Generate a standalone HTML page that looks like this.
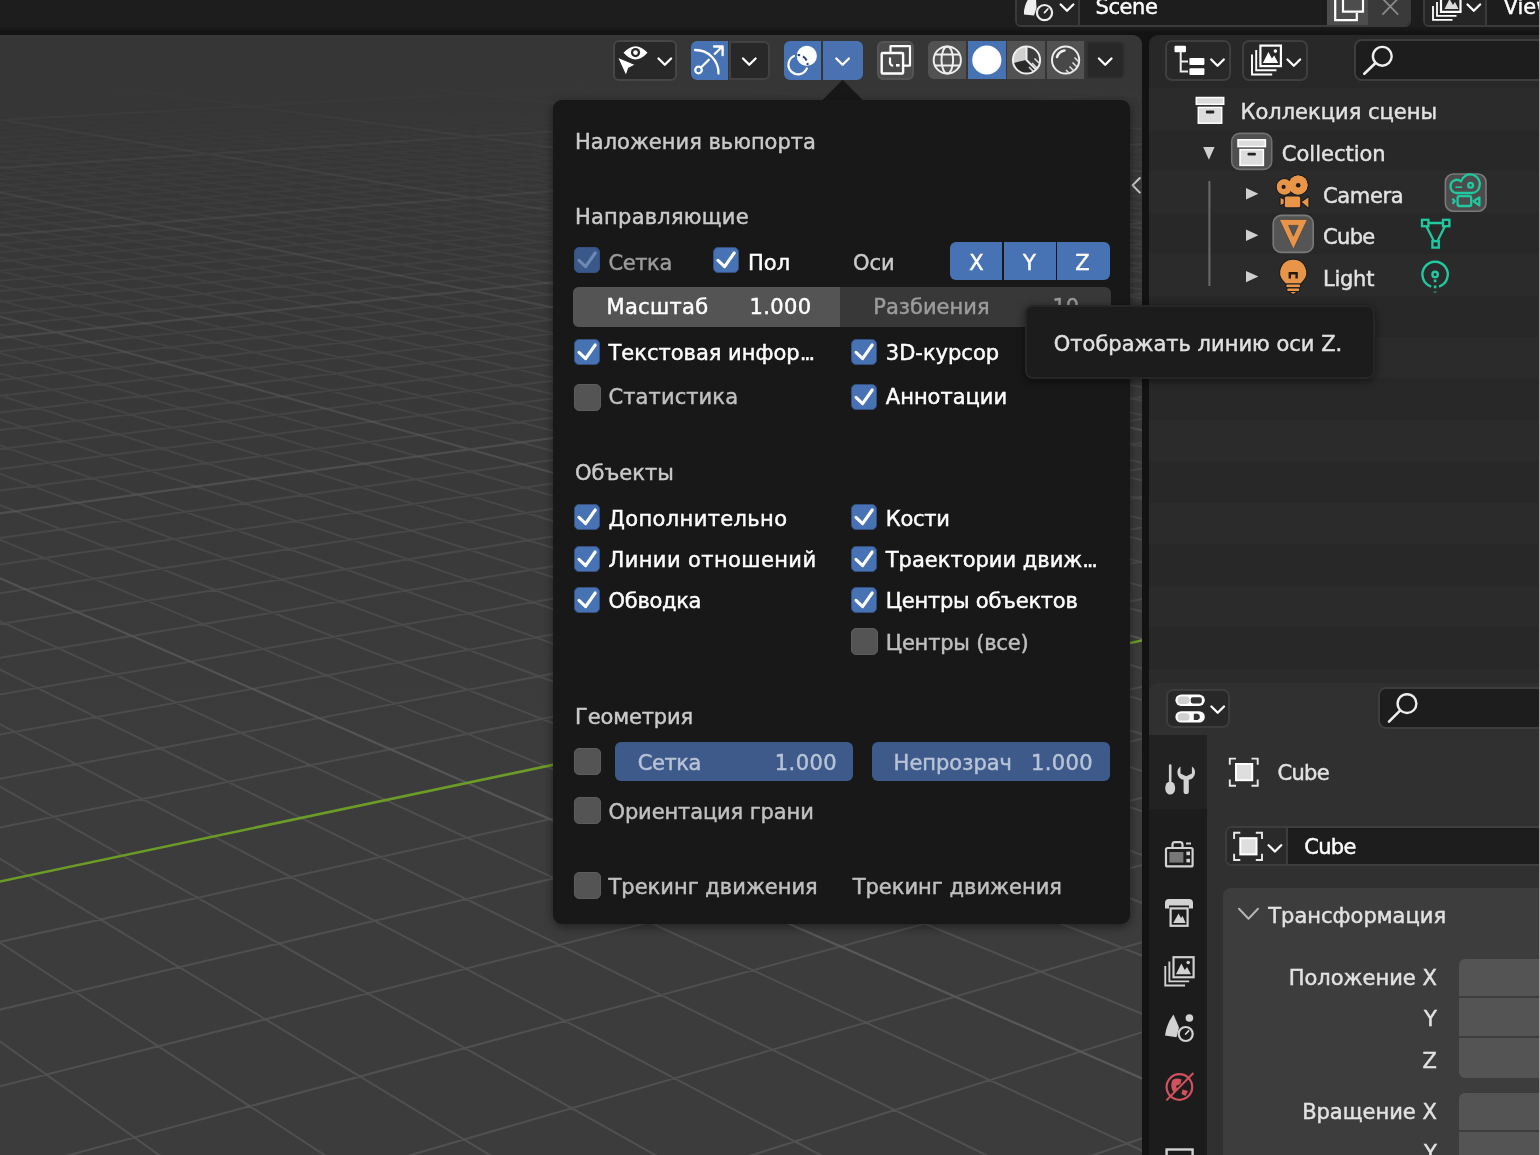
<!DOCTYPE html>
<html lang="ru">
<head>
<meta charset="utf-8">
<title>Blender</title>
<style>
*{box-sizing:border-box;margin:0;padding:0}
html,body{width:1540px;height:1155px;overflow:hidden;background:#131313}
body{position:relative;font-family:"DejaVu Sans","Liberation Sans",sans-serif;font-size:21px;color:#e6e6e6;line-height:1}
.abs{position:absolute}
#root{position:absolute;left:0;top:0;width:1540px;height:1155px;overflow:hidden;will-change:transform}
.t{position:absolute;white-space:nowrap;line-height:26px;height:26px;-webkit-text-stroke:.45px currentColor}
svg{position:absolute;overflow:visible}
#topbar{left:0;top:0;width:1540px;height:33px;background:linear-gradient(#1d1d1d 0,#1d1d1d 26px,#131313 33px)}
#viewport{left:0;top:35px;width:1142px;height:1120px;background:linear-gradient(#363636 0,#363636 8%,#3c3c3c 65%,#3c3c3c 100%);border-top-right-radius:9px;overflow:hidden}
#outliner{left:1149px;top:35px;width:400px;height:641px;background:#282828;border-radius:9px 0 0 9px;overflow:hidden}
#props{left:1149px;top:683px;width:400px;height:480px;background:#303030;border-radius:9px 0 0 0;overflow:hidden}
.btn{position:absolute;background:#282828;border:1px solid #3d3d3d;border-radius:6px}
.blue{background:#4772b3}
.cb{position:absolute;width:26px;height:26px;border-radius:5px;background:#4772b3;border:1px solid #35507d}
.cb.off{background:#545454;border-color:#5c5c5c;width:27px;height:27px;margin:-.5px 0 0 -.5px}
.cb.dis{background:#3a588a;border-color:#34507e}
.cb svg{left:-1px;top:-1px}
#pop{left:553px;top:100px;width:577px;height:824px;background:#181818;border-radius:9px;box-shadow:0 3px 10px rgba(0,0,0,.45)}
.lab{color:#cacaca}
.on{color:#ffffff}
.offt{color:#c0c0c0}
.dim{color:#9c9c9c}
.el{letter-spacing:-2.2px}
.otx{color:#e2e2e2}
.slab{color:#b9c3d6}
#tip{left:1025.2px;top:305.2px;width:349.4px;height:74px;background:#1c1c1c;border:2px solid #262626;border-radius:8px;box-shadow:0 2px 8px rgba(0,0,0,.5)}
</style>
</head>
<body><div id="root">
<div id="topbar" class="abs"></div>

<!-- ================= VIEWPORT ================= -->
<div id="viewport" class="abs">
<svg width="1142" height="1120" viewBox="0 35 1142 1120" style="left:0;top:0">
<defs>
<linearGradient id="fadeMinor" gradientUnits="userSpaceOnUse" x1="0" y1="35" x2="0" y2="1155">
<stop offset="0.06" stop-color="#fff" stop-opacity="0"/>
<stop offset="0.1" stop-color="#fff" stop-opacity="0.14"/>
<stop offset="0.25" stop-color="#fff" stop-opacity="0.4"/>
<stop offset="0.5" stop-color="#fff" stop-opacity="0.68"/>
<stop offset="0.75" stop-color="#fff" stop-opacity="0.9"/>
<stop offset="1" stop-color="#fff" stop-opacity="1"/>
</linearGradient>
<linearGradient id="fadeMajor" gradientUnits="userSpaceOnUse" x1="0" y1="35" x2="0" y2="1155">
<stop offset="0.04" stop-color="#fff" stop-opacity="0"/>
<stop offset="0.09" stop-color="#fff" stop-opacity="0.22"/>
<stop offset="0.25" stop-color="#fff" stop-opacity="0.5"/>
<stop offset="0.5" stop-color="#fff" stop-opacity="0.78"/>
<stop offset="0.75" stop-color="#fff" stop-opacity="0.95"/>
<stop offset="1" stop-color="#fff" stop-opacity="1"/>
</linearGradient>
<mask id="mMinor" maskUnits="userSpaceOnUse" x="0" y="35" width="1142" height="1120"><rect x="0" y="35" width="1142" height="1120" fill="url(#fadeMinor)"/></mask>
<mask id="mMajor" maskUnits="userSpaceOnUse" x="0" y="35" width="1142" height="1120"><rect x="0" y="35" width="1142" height="1120" fill="url(#fadeMajor)"/></mask>
</defs>
<g mask="url(#mMinor)"><path d="M-5.0 31.8L42.6 30.0M-5.0 33.7L91.3 30.0M-5.0 37.7L188.7 30.0M-5.0 39.7L237.3 30.0M-5.0 41.8L286.0 30.0M-5.0 43.9L334.7 30.0M-5.0 46.0L383.4 30.0M-5.0 48.2L432.0 30.0M-5.0 50.5L480.7 30.0M-5.0 52.8L529.4 30.0M-5.0 55.1L578.1 30.0M-5.0 60.0L675.4 30.0M-5.0 62.5L724.1 30.0M-5.0 65.1L772.8 30.0M-5.0 67.7L821.4 30.0M-5.0 70.4L870.1 30.0M-5.0 73.2L918.8 30.0M-5.0 76.0L967.5 30.0M-5.0 78.9L1016.1 30.0M-5.0 81.9L1064.8 30.0M-5.0 88.1L1147.0 30.8M-5.0 91.3L1147.0 33.2M-5.0 94.6L1147.0 35.8M-5.0 98.0L1147.0 38.3M-5.0 101.5L1147.0 41.0M-5.0 105.1L1147.0 43.8M-5.0 108.8L1147.0 46.6M-5.0 112.6L1147.0 49.5M-5.0 116.5L1147.0 52.5M-5.0 124.6L1147.0 58.7M-5.0 128.9L1147.0 62.0M-5.0 133.2L1147.0 65.3M-5.0 137.8L1147.0 68.8M-5.0 142.4L1147.0 72.4M-5.0 147.2L1147.0 76.1M-5.0 152.2L1147.0 79.9M-5.0 157.4L1147.0 83.8M-5.0 162.7L1147.0 87.9M-5.0 173.8L1147.0 96.4M-5.0 179.7L1147.0 100.9M-5.0 185.8L1147.0 105.6M-5.0 192.2L1147.0 110.5M-5.0 198.7L1147.0 115.5M-5.0 205.5L1147.0 120.7M-5.0 212.6L1147.0 126.1M-5.0 220.0L1147.0 131.8M-5.0 227.6L1147.0 137.7M-5.0 243.9L1147.0 150.1M-5.0 252.6L1147.0 156.8M-5.0 261.7L1147.0 163.7M-5.0 271.2L1147.0 171.0M-5.0 281.1L1147.0 178.6M-5.0 291.4L1147.0 186.5M-5.0 302.3L1147.0 194.9M-5.0 313.8L1147.0 203.6M-5.0 325.8L1147.0 212.8M-5.0 351.7L1147.0 232.7M-5.0 365.8L1147.0 243.5M-5.0 380.6L1147.0 254.9M-5.0 396.3L1147.0 266.9M-5.0 413.0L1147.0 279.7M-5.0 430.7L1147.0 293.2M-5.0 449.5L1147.0 307.6M-5.0 469.6L1147.0 323.0M-5.0 491.1L1147.0 339.5M-5.0 538.7L1147.0 376.0M-5.0 565.3L1147.0 396.3M-5.0 593.9L1147.0 418.2M-5.0 624.9L1147.0 442.0M-5.0 658.6L1147.0 467.8M-5.0 695.3L1147.0 496.0M-5.0 735.5L1147.0 526.7M-5.0 779.7L1147.0 560.6M-5.0 828.4L1147.0 597.9M-5.0 943.0L1147.0 685.7M-5.0 1010.8L1147.0 737.6M-5.0 1087.6L1147.0 796.5M51.0 1160.0L1147.0 863.6M393.6 1160.0L1147.0 940.8M736.3 1160.0L1147.0 1030.7M1078.9 1160.0L1147.0 1136.6M-0.0 1160.0L-5.0 1156.1M166.0 1160.0L-5.0 1037.9M332.0 1160.0L-5.0 939.3M498.0 1160.0L-5.0 855.7M664.0 1160.0L-5.0 783.9M830.1 1160.0L-5.0 721.6M996.1 1160.0L-5.0 667.1M1147.0 1153.0L-5.0 618.9M1147.0 1015.9L-5.0 537.7M1147.0 957.6L-5.0 503.2M1147.0 904.8L-5.0 471.9M1147.0 856.8L-5.0 443.5M1147.0 812.9L-5.0 417.5M1147.0 772.7L-5.0 393.7M1147.0 735.7L-5.0 371.7M1147.0 701.5L-5.0 351.5M1147.0 669.8L-5.0 332.7M1147.0 613.0L-5.0 299.1M1147.0 587.4L-5.0 283.9M1147.0 563.5L-5.0 269.7M1147.0 541.1L-5.0 256.4M1147.0 520.0L-5.0 244.0M1147.0 500.1L-5.0 232.2M1147.0 481.4L-5.0 221.1M1147.0 463.7L-5.0 210.6M1147.0 447.0L-5.0 200.7M1147.0 416.1L-5.0 182.4M1147.0 401.8L-5.0 174.0M1147.0 388.2L-5.0 165.9M1147.0 375.3L-5.0 158.2M1147.0 362.9L-5.0 150.9M1147.0 351.1L-5.0 143.9M1147.0 339.9L-5.0 137.3M1147.0 329.1L-5.0 130.9M1147.0 318.8L-5.0 124.8M1147.0 299.4L-5.0 113.3M1147.0 290.3L-5.0 107.9M1147.0 281.5L-5.0 102.7M1147.0 273.1L-5.0 97.7M1147.0 265.0L-5.0 92.9M1147.0 257.2L-5.0 88.3M1147.0 249.7L-5.0 83.9M1147.0 242.4L-5.0 79.6M1147.0 235.4L-5.0 75.4M1147.0 222.2L-5.0 67.5M1147.0 215.8L-5.0 63.8M1147.0 209.7L-5.0 60.2M1147.0 203.8L-5.0 56.7M1147.0 198.1L-5.0 53.3M1147.0 192.6L-5.0 50.0M1147.0 187.2L-5.0 46.8M1147.0 182.0L-5.0 43.8M1147.0 176.9L-5.0 40.8M1147.0 167.3L-5.0 35.0M1147.0 162.7L-5.0 32.3M1147.0 158.2L-1.7 30.0M1147.0 153.8L21.9 30.0M1147.0 149.5L45.5 30.0M1147.0 145.4L69.1 30.0M1147.0 141.4L92.6 30.0M1147.0 137.4L116.2 30.0M1147.0 133.6L139.8 30.0M1147.0 126.3L187.0 30.0M1147.0 122.7L210.6 30.0M1147.0 119.3L234.2 30.0M1147.0 115.9L257.7 30.0M1147.0 112.6L281.3 30.0M1147.0 109.4L304.9 30.0M1147.0 106.3L328.5 30.0M1147.0 103.2L352.1 30.0M1147.0 100.2L375.7 30.0M1147.0 94.5L422.8 30.0M1147.0 91.7L446.4 30.0M1147.0 88.9L470.0 30.0M1147.0 86.3L493.6 30.0M1147.0 83.7L517.2 30.0M1147.0 81.1L540.8 30.0M1147.0 78.6L564.4 30.0M1147.0 76.1L587.9 30.0M1147.0 73.7L611.5 30.0M1147.0 69.1L658.7 30.0M1147.0 66.8L682.3 30.0M1147.0 64.6L705.9 30.0M1147.0 62.4L729.5 30.0M1147.0 60.3L753.1 30.0M1147.0 58.2L776.6 30.0M1147.0 56.2L800.2 30.0M1147.0 54.2L823.8 30.0M1147.0 52.2L847.4 30.0M1147.0 48.4L894.6 30.0M1147.0 46.5L918.2 30.0M1147.0 44.7L941.7 30.0M1147.0 42.9L965.3 30.0M1147.0 41.1L988.9 30.0M1147.0 39.4L1012.5 30.0M1147.0 37.6L1036.1 30.0M1147.0 36.0L1059.7 30.0M1147.0 34.3L1083.3 30.0M1147.0 31.1L1130.4 30.0" stroke="#515151" stroke-width="2" fill="none"/></g>
<g mask="url(#mMajor)"><path d="M-5.0 35.7L140.0 30.0M-5.0 57.5L626.7 30.0M-5.0 85.0L1113.5 30.0M-5.0 120.5L1147.0 55.5M-5.0 168.2L1147.0 92.1M-5.0 235.6L1147.0 143.8M-5.0 338.4L1147.0 222.5M-5.0 514.0L1147.0 357.1M1147.0 1080.7L-5.0 576.1M1147.0 640.4L-5.0 315.3M1147.0 431.1L-5.0 191.3M1147.0 308.9L-5.0 118.9M1147.0 228.7L-5.0 71.4M1147.0 172.0L-5.0 37.9M1147.0 129.9L163.4 30.0M1147.0 97.3L399.3 30.0M1147.0 71.4L635.1 30.0M1147.0 50.3L871.0 30.0M1147.0 32.7L1106.8 30.0" stroke="#595959" stroke-width="2.2" fill="none"/></g>
<path d="M-5.0 882.6L1147.0 639.4" stroke="#6c9c28" stroke-width="2.6" fill="none"/>
</svg>
</div>

<!-- viewport header buttons -->
<div class="abs" style="left:613.0px;top:40.0px;width:64.0px;height:40.5px;background:#282828;border:2px solid #464646;border-radius:6px"></div>
<div class="abs" style="left:690.8px;top:41.3px;width:37.2px;height:38.3px;background:#4772b3;border:2px solid #4772b3;border-radius:6px 0 0 6px"></div>
<div class="abs" style="left:729.0px;top:40.5px;width:41.0px;height:39.5px;background:#282828;border:2px solid #424242;border-radius:0 6px 6px 0"></div>
<div class="abs" style="left:784.2px;top:41.3px;width:36.8px;height:38.3px;background:#4772b3;border:2px solid #4772b3;border-radius:6px 0 0 6px"></div>
<div class="abs" style="left:822.8px;top:41.3px;width:40.0px;height:38.3px;background:#4a71b0;border:2px solid #4a71b0;border-radius:0 6px 6px 0"></div>
<div class="abs" style="left:877.0px;top:41.0px;width:37.0px;height:38.8px;background:#4b4b4b;border:2px solid #545454;border-radius:6px"></div>
<div class="abs" style="left:928.0px;top:41.2px;width:38.0px;height:38.0px;background:#525252;border:2px solid #525252;border-radius:6px 0 0 6px"></div>
<div class="abs" style="left:967.8px;top:41.2px;width:37.8px;height:38.0px;background:#4772b3;border:2px solid #4772b3;border-radius:0"></div>
<div class="abs" style="left:1007.4px;top:41.2px;width:37.6px;height:38.0px;background:#525252;border:2px solid #525252;border-radius:0"></div>
<div class="abs" style="left:1046.8px;top:41.2px;width:37.7px;height:38.0px;background:#525252;border:2px solid #525252;border-radius:0"></div>
<div class="abs" style="left:1086.0px;top:41.2px;width:39.0px;height:38.0px;background:#282828;border:2px solid #303030;border-radius:0 6px 6px 0"></div>

<!-- ================= TOPBAR ================= -->
<div class="abs" style="left:1014.5px;top:-8px;width:396px;height:35.2px;background:#1d1d1d;border:2px solid #3a3a3a;border-radius:6px;overflow:hidden"><div class="abs" style="left:0;top:0;width:63.5px;height:34px;background:#252525;border-right:2px solid #3a3a3a"></div><div class="abs" style="left:310px;top:0;width:41.5px;height:34px;background:#4d4d4d"></div><div class="abs" style="left:351.5px;top:0;width:42px;height:34px;background:#3a3a3a"></div></div>
<div class="t on" style="left:1095.5px;top:-5.6px;letter-spacing:-.4px">Scene</div>
<div class="abs" style="left:1422.5px;top:-8px;width:140px;height:35.2px;background:#1d1d1d;border:2px solid #3a3a3a;border-radius:6px;overflow:hidden"><div class="abs" style="left:0;top:0;width:62.5px;height:34px;background:#252525;border-right:2px solid #3a3a3a"></div></div>
<div class="t on" style="left:1503.5px;top:-5.8px;">ViewLayer</div>

<!-- ================= OUTLINER ================= -->
<div id="outliner" class="abs"></div>
<div class="abs" style="left:1149px;top:88.3px;width:400px;height:41.45px;background:#2b2b2b"></div>
<div class="abs" style="left:1149px;top:171.2px;width:400px;height:41.45px;background:#2b2b2b"></div>
<div class="abs" style="left:1149px;top:254.1px;width:400px;height:41.45px;background:#2b2b2b"></div>
<div class="abs" style="left:1149px;top:337.0px;width:400px;height:41.45px;background:#2b2b2b"></div>
<div class="abs" style="left:1149px;top:419.9px;width:400px;height:41.45px;background:#2b2b2b"></div>
<div class="abs" style="left:1149px;top:502.8px;width:400px;height:41.45px;background:#2b2b2b"></div>
<div class="abs" style="left:1149px;top:585.7px;width:400px;height:41.45px;background:#2b2b2b"></div>
<div class="abs" style="left:1149px;top:668.6px;width:400px;height:41.45px;background:#2b2b2b"></div>
<div class="abs" style="left:1165.0px;top:39.5px;width:66.0px;height:41.5px;background:#282828;border:2px solid #3f3f3f;border-radius:7px"></div>
<div class="abs" style="left:1242.0px;top:39.5px;width:65.5px;height:41.5px;background:#282828;border:2px solid #3f3f3f;border-radius:7px"></div>
<div class="abs" style="left:1353.5px;top:39.3px;width:206.5px;height:42.1px;background:#1d1d1d;border:2px solid #3d3d3d;border-radius:8px"></div>
<div class="t otx" style="left:1240.5px;top:99.3px;">Коллекция сцены</div>
<div class="t otx" style="left:1281.8px;top:140.9px;">Collection</div>
<div class="t otx" style="left:1323.0px;top:182.5px;letter-spacing:-.35px">Camera</div>
<div class="t otx" style="left:1323.0px;top:224.1px;letter-spacing:-.65px">Cube</div>
<div class="t otx" style="left:1323.0px;top:265.7px;letter-spacing:-.26px">Light</div>

<!-- ================= PROPERTIES ================= -->
<div id="props" class="abs"></div>
<div class="abs" style="left:1149px;top:734.5px;width:57.5px;height:430px;background:#1c1c1c"></div>
<div class="abs" style="left:1149px;top:734.5px;width:57.5px;height:74.5px;background:#222222"></div>
<div class="abs" style="left:1165.5px;top:688.5px;width:64.5px;height:39.5px;background:#282828;border:2px solid #3d3d3d;border-radius:7px"></div>
<div class="abs" style="left:1377.8px;top:687.0px;width:182.2px;height:42.0px;background:#1d1d1d;border:2px solid #3d3d3d;border-radius:8px"></div>
<div class="t otx" style="left:1277.5px;top:759.7px;letter-spacing:-.7px">Cube</div>
<div class="abs" style="left:1224.5px;top:826.3px;width:340px;height:40px;background:#1d1d1d;border:2px solid #3d3d3d;border-radius:7px;overflow:hidden"><div class="abs" style="left:0;top:0;width:61.5px;height:40px;background:#2a2a2a;border-right:2px solid #3d3d3d"></div></div>
<div class="t on" style="left:1304.3px;top:834.1px;letter-spacing:-.7px">Cube</div>
<div class="abs" style="left:1222.5px;top:887.5px;width:340px;height:300px;background:#3d3d3d;border-radius:8px"></div>
<div class="t otx" style="left:1268.3px;top:903.3px;">Трансформация</div>
<div class="abs" style="left:1458.8px;top:958.6px;width:100px;height:37.6px;background:#545454;border-radius:6px 0 0 0"></div>
<div class="abs" style="left:1458.8px;top:998.0px;width:100px;height:38.4px;background:#545454;border-radius:0"></div>
<div class="abs" style="left:1458.8px;top:1038.3px;width:100px;height:39.3px;background:#545454;border-radius:0 0 0 6px"></div>
<div class="abs" style="left:1458.8px;top:1093.2px;width:100px;height:37.2px;background:#545454;border-radius:6px 0 0 0"></div>
<div class="abs" style="left:1458.8px;top:1132.2px;width:100px;height:37.8px;background:#545454;border-radius:0"></div>
<div class="t otx" style="left:1136.8px;top:964.9px;width:300px;text-align:right">Положение X</div>
<div class="t otx" style="left:1136.8px;top:1005.9px;width:300px;text-align:right">Y</div>
<div class="t otx" style="left:1136.8px;top:1047.5px;width:300px;text-align:right">Z</div>
<div class="t otx" style="left:1136.8px;top:1098.9px;width:300px;text-align:right">Вращение X</div>
<div class="t otx" style="left:1136.8px;top:1140.3px;width:300px;text-align:right">Y</div>

<!-- ================= ICONS (page coordinates) ================= -->
<svg width="1540" height="1155" viewBox="0 0 1540 1155" style="left:0;top:0">
<path d="M623.5 52.8Q635.5 39.5 647.5 52.8Q635.5 66 623.5 52.8Z" fill="#fff"/><circle cx="635.5" cy="52.6" r="4.6" fill="#282828"/><circle cx="635.5" cy="52.6" r="2.3" fill="#fff"/>
<path d="M617.3 57L635.6 64.8L628.6 68.4L626 76Z" fill="#fff" stroke="#282828" stroke-width="1.2" stroke-linejoin="round"/>
<path d="M658.5 58.5L664.8 64.7L671.1 58.5" fill="none" stroke="#fff" stroke-width="2.3" stroke-linecap="round" stroke-linejoin="round"/>
<path d="M701 67.5L722 46.8M714 46.5H722.6V55.2" fill="none" stroke="#fff" stroke-width="2.3" stroke-linecap="round" stroke-linejoin="round"/>
<path d="M695 50A23 23 0 0 1 718.5 73.5" fill="none" stroke="#4772b3" stroke-width="6.5"/>
<path d="M695 50A23 23 0 0 1 718.5 73.5" fill="none" stroke="#fff" stroke-width="2.3" stroke-linecap="round"/>
<circle cx="698.5" cy="70" r="3.3" fill="none" stroke="#fff" stroke-width="2.2"/>
<path d="M743.0 58.5L749.3 64.7L755.6 58.5" fill="none" stroke="#fff" stroke-width="2.3" stroke-linecap="round" stroke-linejoin="round"/>
<circle cx="806.8" cy="55.9" r="10.1" fill="#fff"/>
<path d="M794 56A9.6 9.6 0 1 0 806.9 68.4" fill="none" stroke="#fff" stroke-width="2.2" stroke-linecap="round"/>
<path d="M797.6 55.1A9.6 9.6 0 0 1 807.6 65.2" fill="none" stroke="#27406e" stroke-width="2" stroke-dasharray="2.6 3 5.4 2.6 4.4 9"/>
<path d="M836.3 58.5L842.6 64.7L848.9 58.5" fill="none" stroke="#fff" stroke-width="2.3" stroke-linecap="round" stroke-linejoin="round"/>
<path d="M822 100.5L842.6 79.8L863.2 100.5Z" fill="#181818"/>
<path d="M890.5 52V46.2H910V65.6H904" fill="none" stroke="#fff" stroke-width="2.2" stroke-linejoin="round"/>
<rect x="881.7" y="53" width="21.4" height="20.5" fill="none" stroke="#fff" stroke-width="2.4" rx="1"/>
<path d="M890 57.5V62.5A3.2 3.2 0 0 0 893.2 65.7" fill="none" stroke="#fff" stroke-width="2.2"/><rect x="896" y="64" width="3.6" height="2.6" fill="#fff"/>
<g fill="none" stroke="#eee" stroke-width="2"><circle cx="947.3" cy="60" r="13.6"/><ellipse cx="947.3" cy="60" rx="5.8" ry="13.6"/><path d="M934.8 54.5H959.8M934.8 65.5H959.8"/></g>
<circle cx="986.8" cy="60" r="14.6" fill="#fff"/>
<circle cx="1026.5" cy="60" r="13.6" fill="#3c3c3c"/><path d="M1026.5 46.4A13.6 13.6 0 0 0 1013.2 63L1026.5 60Z" fill="#d0d0d0"/><path d="M1026.5 60L1013.4 63.5A13.6 13.6 0 0 0 1036 69.6Z" fill="#2a2a2a"/>
<path d="M1029 67L1034 72M1032 63L1037.5 68.5M1034.5 58.5L1039 63" stroke="#ddd" stroke-width="1.6"/>
<g fill="none" stroke="#eee" stroke-width="2"><circle cx="1026.5" cy="60" r="13.6"/><path d="M1026.5 46.4V60L1036 69.6"/></g>
<circle cx="1065.6" cy="60" r="13.6" fill="#484848" stroke="#eee" stroke-width="2"/>
<path d="M1057 57A9.5 9.5 0 0 1 1064.5 50.5" fill="none" stroke="#eee" stroke-width="2.6" stroke-linecap="round"/>
<path d="M1066 70L1070 74M1069.5 66.5L1074 71M1072.5 62.5L1077 67M1074.5 57.5L1078.5 61.5" stroke="#ddd" stroke-width="1.6"/>
<path d="M1098.9 58.5L1105.2 64.7L1111.5 58.5" fill="none" stroke="#fff" stroke-width="2.3" stroke-linecap="round" stroke-linejoin="round"/>
<path d="M1139.8 178L1132.6 185.3L1139.8 192.6" fill="none" stroke="#c8c8c8" stroke-width="2" stroke-linecap="round" stroke-linejoin="round"/>
<path d="M1029 -2L1036 -2L1036.5 8L1034 15.5L1024 14.5Q1023.5 6 1029 -2Z" fill="#eee"/>
<circle cx="1044.5" cy="12.6" r="7.6" fill="#252525" stroke="#eee" stroke-width="2.2"/><path d="M1044.5 12.6L1047.8 9" stroke="#eee" stroke-width="1.8" stroke-linecap="round"/>
<path d="M1060.7 4.5L1067.0 10.7L1073.3 4.5" fill="none" stroke="#fff" stroke-width="2.3" stroke-linecap="round" stroke-linejoin="round"/>
<path d="M1343 -2V11.6H1363V-2" fill="none" stroke="#fff" stroke-width="2.2"/><path d="M1335.2 -2V20.2H1356.8V13" fill="none" stroke="#fff" stroke-width="2.2"/>
<path d="M1381 -3L1398.2 14.6M1399.5 -3L1382.4 14.6" stroke="#8a8a8a" stroke-width="1.8"/>
<path d="M1441 -2V11.8H1460.5V-2" fill="none" stroke="#fff" stroke-width="2.2"/><path d="M1444.5 9L1449.5 -1L1453 5L1455 2L1458.5 9Z" fill="#ddd"/>
<path d="M1437 2V15.8H1456.5M1433 6V19.8H1452.5" fill="none" stroke="#fff" stroke-width="1.8"/>
<path d="M1467.5 4.5L1473.8 10.7L1480.1 4.5" fill="none" stroke="#fff" stroke-width="2.3" stroke-linecap="round" stroke-linejoin="round"/>
<rect x="1174.5" y="45.8" width="11.5" height="6.4" fill="#fff" rx="1"/><path d="M1180.7 52V71.6H1188M1180.7 61.6H1188" fill="none" stroke="#eee" stroke-width="2"/><rect x="1189.4" y="58" width="15" height="7" fill="#fff" rx="1"/><rect x="1189.4" y="68.2" width="15" height="6.8" fill="#fff" rx="1"/>
<path d="M1211.2 59.5L1217.5 65.7L1223.8 59.5" fill="none" stroke="#fff" stroke-width="2.3" stroke-linecap="round" stroke-linejoin="round"/>
<g transform="translate(1260.4 45.6) scale(1.000)"><rect x="0" y="0" width="20.5" height="20.5" fill="none" stroke="#fff" stroke-width="2.2"/><path d="M2.5 17.5L8 6.5L11.5 13L13.8 10L17.8 17.5Z" fill="#fff"/><circle cx="15" cy="5.5" r="1.8" fill="#fff"/><path d="M-4.2 4.5V24.7H16M-8.4 9V28.9H11.8" fill="none" stroke="#fff" stroke-width="1.9"/></g>
<path d="M1287.5 59.5L1293.8 65.7L1300.1 59.5" fill="none" stroke="#fff" stroke-width="2.3" stroke-linecap="round" stroke-linejoin="round"/>
<circle cx="1382.3" cy="56.3" r="9.4" fill="none" stroke="#eee" stroke-width="2.4"/><path d="M1375.5 63L1364.3 73.8" stroke="#eee" stroke-width="2.6" stroke-linecap="round"/>
<rect x="1196.3" y="97.5" width="27.4" height="6.8" fill="#dcdcdc" stroke="#fff" stroke-width="1.5"/><rect x="1198.3" y="107.4" width="23.4" height="15.8" fill="#dcdcdc" stroke="#fff" stroke-width="1.5"/><rect x="1205.9" y="110.6" width="8.4" height="2.8" fill="#222" rx="1"/>
<rect x="1231.7" y="133.4" width="40" height="36" rx="8" fill="#4f4f4f" stroke="#717171" stroke-width="1.6"/>
<rect x="1238.0" y="139.8" width="27.4" height="6.8" fill="#dcdcdc" stroke="#fff" stroke-width="1.5"/><rect x="1240.0" y="149.6" width="23.4" height="15.8" fill="#dcdcdc" stroke="#fff" stroke-width="1.5"/><rect x="1247.5" y="152.8" width="8.4" height="2.8" fill="#222" rx="1"/>
<path d="M1203.2 147L1214.6 147L1208.9 159.8Z" fill="#cfcfcf"/>
<path d="M1246 188.1L1246 199.5L1258.4 193.8Z" fill="#cfcfcf"/>
<path d="M1246 229.5L1246 240.9L1258.4 235.2Z" fill="#cfcfcf"/>
<path d="M1246 270.9L1246 282.3L1258.4 276.6Z" fill="#cfcfcf"/>
<path d="M1209.4 181V286" stroke="#6a6a6a" stroke-width="2"/>
<g fill="#e8954a" stroke="#1c1c1c" stroke-width="2.4" stroke-linejoin="round" paint-order="stroke"><circle cx="1284.4" cy="186.8" r="7.6"/><circle cx="1298.2" cy="185" r="9.4"/><rect x="1284.8" y="196.6" width="15.4" height="10.6" rx="1.5"/><path d="M1301.8 202L1308.4 197.4V207.6Z"/><path d="M1280.6 198L1283.6 199.5V203.5L1280.6 205Z"/></g>
<g fill="#e8954a"><circle cx="1284.4" cy="186.8" r="7.6"/><circle cx="1298.2" cy="185" r="9.4"/></g>
<circle cx="1283.6" cy="186.9" r="2.1" fill="#241a10"/><circle cx="1298.2" cy="185.2" r="2.3" fill="#241a10"/>
<rect x="1273.2" y="215.4" width="40" height="37" rx="8" fill="#555" stroke="#7a7a7a" stroke-width="1.6"/>
<path d="M1279.4 219.4H1307.4L1293.4 249.2ZM1288.6 225.4H1298.2L1293.4 236.2Z" fill="#e8954a" fill-rule="evenodd" stroke="#3a3a3a" stroke-width=".6"/>
<g fill="#e8954a" stroke="#1c1c1c" stroke-width="2.2" stroke-linejoin="round" paint-order="stroke"><path d="M1293.2 259.8A12.6 12.6 0 0 1 1302.4 281.4L1300.4 283.6H1286L1284 281.4A12.6 12.6 0 0 1 1293.2 259.8Z"/><rect x="1286.4" y="284.6" width="13.6" height="2.6" rx="1"/><rect x="1287.2" y="288.4" width="12" height="2.6" rx="1"/><path d="M1290.4 292L1296 292L1293.2 294Z"/></g>
<path d="M1288.6 272H1297.8V278.4H1295.4V274.6H1291V278.4H1288.6Z" fill="#241a10"/>
<rect x="1445.4" y="174" width="40.6" height="37.2" rx="8" fill="#4c4c4c" stroke="#7a7a7a" stroke-width="1.6"/>
<g fill="none" stroke="#20c9a0" stroke-width="2.3" stroke-linejoin="round"><path d="M1450.6 186.5A6.2 6.2 0 0 1 1461 181.5A8.6 8.6 0 0 1 1479.5 186.5A8 8 0 0 1 1471.5 193H1456.5A6 6 0 0 1 1450.6 186.5Z"/><circle cx="1470.6" cy="185.2" r="2.4"/><path d="M1455.5 187.2H1462" stroke-width="1.6"/><rect x="1457.6" y="196.2" width="13.6" height="9.8" rx="1.8"/><path d="M1473.5 201.2L1479.4 197.4V205.4Z"/><path d="M1452.4 198.6L1454.8 201.2L1452.4 203.8"/></g>
<g fill="none" stroke="#20c9a0" stroke-width="2.3"><rect x="1422" y="219.8" width="6.4" height="6.4"/><rect x="1443" y="219.8" width="6.4" height="6.4"/><rect x="1432.4" y="241.2" width="6.4" height="6.4"/><path d="M1428.4 223H1443M1426.5 226.4L1434 241.2M1444.8 226.4L1437.4 241.2"/></g>
<g fill="none" stroke="#20c9a0" stroke-width="2.4"><path d="M1431.2 286.6A12.7 12.7 0 1 1 1439 286.6"/><circle cx="1435.1" cy="274.4" r="2.7"/><path d="M1435.1 279.5V292.5" stroke-dasharray="2.8 3.2" stroke-width="2.6"/></g>
<rect x="1175.4" y="694.6" width="29.4" height="11.4" rx="5.7" fill="#fff"/><rect x="1177.6" y="696.6" width="12" height="7.4" rx="3.7" fill="#d0d0d0"/>
<rect x="1175.4" y="711.2" width="29.4" height="11.4" rx="5.7" fill="#fff"/><rect x="1177.6" y="713.2" width="12" height="7.4" rx="3.7" fill="#d0d0d0"/>
<rect x="1190.8" y="697.2" width="11" height="6.2" rx="2" fill="#333"/><path d="M1193.8 713.8H1197.5A3.2 3.2 0 0 1 1197.5 720H1193.8Z" fill="#333"/>
<path d="M1211.4 706.5L1217.7 712.7L1224.0 706.5" fill="none" stroke="#fff" stroke-width="2.3" stroke-linecap="round" stroke-linejoin="round"/>
<circle cx="1407" cy="703.6" r="9.4" fill="none" stroke="#eee" stroke-width="2.4"/><path d="M1400.2 710.4L1389 721.6" stroke="#eee" stroke-width="2.6" stroke-linecap="round"/>
<path d="M1170.2 765.5V781" stroke="#d2d2d2" stroke-width="2.6" stroke-linecap="round"/><ellipse cx="1170.2" cy="788" rx="5" ry="6.6" fill="#d2d2d2"/>
<path d="M1180.5 766.5A7.4 7.4 0 0 0 1183.6 779.8V791.5A2.6 2.6 0 0 0 1188.8 791.5V779.8A7.4 7.4 0 0 0 1191.9 766.5V773.5L1186.2 776.2L1180.5 773.5Z" fill="#d2d2d2"/>
<g fill="none" stroke="#d2d2d2" stroke-width="2.2" stroke-linejoin="round"><rect x="1166" y="848" width="26.6" height="18.4" rx="1.5"/><path d="M1172.5 848V844.6A2.5 2.5 0 0 1 1175 842.2H1180A2.5 2.5 0 0 1 1182.5 844.6V848"/></g><rect x="1169.4" y="852" width="14" height="10.6" fill="#777"/><rect x="1186.4" y="851.6" width="3.6" height="3.6" fill="#d2d2d2"/><rect x="1186.4" y="858.8" width="3.6" height="3.6" fill="#d2d2d2"/><path d="M1186 843.5H1191" stroke="#d2d2d2" stroke-width="2"/>
<path d="M1165 908.5V903A4 4 0 0 1 1169 899H1189A4 4 0 0 1 1193 903V908.5H1189V905.5H1169V908.5Z" fill="#d2d2d2"/><rect x="1170.6" y="908.4" width="17" height="17.4" fill="none" stroke="#d2d2d2" stroke-width="2.2"/><path d="M1173.2 923L1178.6 913.5L1181 918L1182.6 916L1185.6 923Z" fill="#d2d2d2"/>
<g transform="translate(1173.5 957.2) scale(0.980)"><rect x="0" y="0" width="20.5" height="20.5" fill="none" stroke="#d2d2d2" stroke-width="2.2"/><path d="M2.5 17.5L8 6.5L11.5 13L13.8 10L17.8 17.5Z" fill="#d2d2d2"/><circle cx="15" cy="5.5" r="1.8" fill="#d2d2d2"/><path d="M-4.2 4.5V24.7H16M-8.4 9V28.9H11.8" fill="none" stroke="#d2d2d2" stroke-width="1.9"/></g>
<path d="M1173.5 1014.5L1179 1027.5L1176.5 1037.2L1165 1035.5Q1166.5 1024 1173.5 1014.5Z" fill="#d2d2d2"/><circle cx="1189.4" cy="1018" r="3.8" fill="#d2d2d2"/><circle cx="1185.7" cy="1034" r="7" fill="#1c1c1c" stroke="#d2d2d2" stroke-width="2.2"/><path d="M1185.7 1034L1188.6 1030.8" stroke="#d2d2d2" stroke-width="1.8" stroke-linecap="round"/>
<circle cx="1179.4" cy="1087" r="12.8" fill="none" stroke="#d0525e" stroke-width="2.2"/><path d="M1172.5 1080Q1177 1077.5 1181.5 1079.5L1180.5 1084L1176 1086L1177.5 1090L1173.5 1092.5Q1169.5 1086 1172.5 1080ZM1182.5 1089.5L1188 1091L1185.5 1096L1181.5 1094Z" fill="#d0525e"/><path d="M1166.4 1100.4L1193.4 1073" stroke="#d0525e" stroke-width="2"/>
<rect x="1166.6" y="1149.5" width="26" height="20" fill="none" stroke="#d2d2d2" stroke-width="2.4"/>
<g transform="translate(1229.0 757.8) scale(1.000)"><rect x="7" y="6.2" width="16.2" height="16.2" fill="#dedede" stroke="#fff" stroke-width="2"/><path d="M0.8 7V0.8H7M22.5 0.8H28.7V7M28.7 21.8V28H22.5M7 28H0.8V21.8" fill="none" stroke="#e8e8e8" stroke-width="1.9"/></g>
<g transform="translate(1233.3 832.0) scale(1.000)"><rect x="7" y="6.2" width="16.2" height="16.2" fill="#dedede" stroke="#fff" stroke-width="2"/><path d="M0.8 7V0.8H7M22.5 0.8H28.7V7M28.7 21.8V28H22.5M7 28H0.8V21.8" fill="none" stroke="#e8e8e8" stroke-width="1.9"/></g>
<path d="M1268.6 845.3L1274.9 851.5L1281.2 845.3" fill="none" stroke="#fff" stroke-width="2.3" stroke-linecap="round" stroke-linejoin="round"/>
<path d="M1239.0 908.8L1248.5 918.8L1258.0 908.8" fill="none" stroke="#b4b4b4" stroke-width="2.0" stroke-linecap="round" stroke-linejoin="round"/>
</svg>

<div class="abs" style="left:1538.8px;top:0;width:1.2px;height:1155px;background:#a0a0a0"></div>

<!-- ================= POPOVER ================= -->
<div id="pop" class="abs">
<div class="t lab" style="left:22.0px;top:28.9px;">Наложения вьюпорта</div>
<div class="t lab" style="left:22.0px;top:103.6px;letter-spacing:0.23px;">Направляющие</div>
<div class="cb dis" style="left:21.2px;top:147.3px"><svg width="26" height="26" viewBox="0 0 26 26"><path d="M5 13.4L11.6 19.6L21.2 6" fill="none" stroke="#7089b3" stroke-width="3.1" stroke-linecap="round" stroke-linejoin="round"/></svg></div>
<div class="t dim" style="left:55.5px;top:149.5px;letter-spacing:-0.40px;">Сетка</div>
<div class="cb" style="left:160.0px;top:147.3px"><svg width="26" height="26" viewBox="0 0 26 26"><path d="M5 13.4L11.6 19.6L21.2 6" fill="none" stroke="#fff" stroke-width="3.1" stroke-linecap="round" stroke-linejoin="round"/></svg></div>
<div class="t on" style="left:195.0px;top:149.5px;">Пол</div>
<div class="t lab" style="left:300.0px;top:149.5px;">Оси</div>
<div class="abs" style="left:397px;top:141.5px;width:160px;height:38px;border-radius:6px;overflow:hidden;background:#181818"><div class="abs blue" style="left:0;top:0;width:52px;height:38px"></div><div class="abs blue" style="left:53.5px;top:0;width:52px;height:38px"></div><div class="abs blue" style="left:107px;top:0;width:53px;height:38px"></div></div>
<div class="t on" style="left:403.5px;top:149.5px;width:40px;text-align:center">X</div>
<div class="t on" style="left:456.5px;top:149.5px;width:40px;text-align:center">Y</div>
<div class="t on" style="left:509.5px;top:149.5px;width:40px;text-align:center">Z</div>
<div class="abs" style="left:19.6px;top:186.5px;width:538px;height:40px;border-radius:6px;overflow:hidden;background:#383838"><div class="abs" style="left:0;top:0;width:267.5px;height:40px;background:#545454"></div></div>
<div class="t on" style="left:53.5px;top:193.7px;letter-spacing:0.30px;">Масштаб</div>
<div class="t on" style="left:196.5px;top:193.7px;letter-spacing:0.40px;">1.000</div>
<div class="t dim" style="left:320.3px;top:193.7px;">Разбиения</div>
<div class="t dim" style="left:499.5px;top:193.7px;">10</div>
<div class="cb" style="left:21.2px;top:238.5px"><svg width="26" height="26" viewBox="0 0 26 26"><path d="M5 13.4L11.6 19.6L21.2 6" fill="none" stroke="#fff" stroke-width="3.1" stroke-linecap="round" stroke-linejoin="round"/></svg></div>
<div class="t on" style="left:55.5px;top:239.7px;">Текстовая инфор<span class="el">...</span></div>
<div class="cb" style="left:298.3px;top:238.5px"><svg width="26" height="26" viewBox="0 0 26 26"><path d="M5 13.4L11.6 19.6L21.2 6" fill="none" stroke="#fff" stroke-width="3.1" stroke-linecap="round" stroke-linejoin="round"/></svg></div>
<div class="t on" style="left:332.8px;top:239.7px;">3D-курсор</div>
<div class="cb off" style="left:21.2px;top:284.0px"></div>
<div class="t offt" style="left:55.5px;top:284.4px;letter-spacing:0.10px;">Статистика</div>
<div class="cb" style="left:298.3px;top:284.0px"><svg width="26" height="26" viewBox="0 0 26 26"><path d="M5 13.4L11.6 19.6L21.2 6" fill="none" stroke="#fff" stroke-width="3.1" stroke-linecap="round" stroke-linejoin="round"/></svg></div>
<div class="t on" style="left:332.8px;top:284.4px;">Аннотации</div>
<div class="t lab" style="left:22.0px;top:360.1px;">Объекты</div>
<div class="cb" style="left:21.2px;top:404.2px"><svg width="26" height="26" viewBox="0 0 26 26"><path d="M5 13.4L11.6 19.6L21.2 6" fill="none" stroke="#fff" stroke-width="3.1" stroke-linecap="round" stroke-linejoin="round"/></svg></div>
<div class="t on" style="left:55.5px;top:405.9px;letter-spacing:0.36px;">Дополнительно</div>
<div class="cb" style="left:298.3px;top:404.2px"><svg width="26" height="26" viewBox="0 0 26 26"><path d="M5 13.4L11.6 19.6L21.2 6" fill="none" stroke="#fff" stroke-width="3.1" stroke-linecap="round" stroke-linejoin="round"/></svg></div>
<div class="t on" style="left:332.8px;top:405.9px;letter-spacing:-0.30px;">Кости</div>
<div class="cb" style="left:21.2px;top:446.0px"><svg width="26" height="26" viewBox="0 0 26 26"><path d="M5 13.4L11.6 19.6L21.2 6" fill="none" stroke="#fff" stroke-width="3.1" stroke-linecap="round" stroke-linejoin="round"/></svg></div>
<div class="t on" style="left:55.5px;top:447.2px;letter-spacing:0.40px;">Линии отношений</div>
<div class="cb" style="left:298.3px;top:446.0px"><svg width="26" height="26" viewBox="0 0 26 26"><path d="M5 13.4L11.6 19.6L21.2 6" fill="none" stroke="#fff" stroke-width="3.1" stroke-linecap="round" stroke-linejoin="round"/></svg></div>
<div class="t on" style="left:332.8px;top:447.2px;">Траектории движ<span class="el">...</span></div>
<div class="cb" style="left:21.2px;top:487.3px"><svg width="26" height="26" viewBox="0 0 26 26"><path d="M5 13.4L11.6 19.6L21.2 6" fill="none" stroke="#fff" stroke-width="3.1" stroke-linecap="round" stroke-linejoin="round"/></svg></div>
<div class="t on" style="left:55.5px;top:488.2px;letter-spacing:-0.30px;">Обводка</div>
<div class="cb" style="left:298.3px;top:487.3px"><svg width="26" height="26" viewBox="0 0 26 26"><path d="M5 13.4L11.6 19.6L21.2 6" fill="none" stroke="#fff" stroke-width="3.1" stroke-linecap="round" stroke-linejoin="round"/></svg></div>
<div class="t on" style="left:332.8px;top:488.2px;letter-spacing:-0.25px;">Центры объектов</div>
<div class="cb off" style="left:298.3px;top:528.5px"></div>
<div class="t offt" style="left:332.8px;top:529.6px;letter-spacing:-0.20px;">Центры (все)</div>
<div class="t lab" style="left:22.0px;top:603.7px;letter-spacing:-0.12px;">Геометрия</div>
<div class="cb off" style="left:21.0px;top:648.0px"></div>
<div class="abs" style="left:62.4px;top:642.2px;width:237.5px;height:38.5px;border-radius:6px;background:#3d5a8a"></div>
<div class="abs" style="left:319.4px;top:642.2px;width:237.5px;height:38.5px;border-radius:6px;background:#3d5a8a"></div>
<div class="t slab" style="left:84.7px;top:649.5px;letter-spacing:-0.40px;">Сетка</div>
<div class="t slab" style="left:221.8px;top:649.5px;letter-spacing:0.40px;">1.000</div>
<div class="t slab" style="left:340.6px;top:649.5px;">Непрозрач</div>
<div class="t slab" style="left:478.0px;top:649.5px;letter-spacing:0.40px;">1.000</div>
<div class="cb off" style="left:21.2px;top:697.6px"></div>
<div class="t offt" style="left:55.5px;top:699.4px;letter-spacing:-0.12px;">Ориентация грани</div>
<div class="cb off" style="left:21.2px;top:772.6px"></div>
<div class="t offt" style="left:55.5px;top:774.2px;">Трекинг движения</div>
<div class="t offt" style="left:299.7px;top:774.2px;">Трекинг движения</div>
</div>

<!-- ================= TOOLTIP ================= -->
<div id="tip" class="abs"><div class="t" style="left:26.6px;top:23.8px;color:#e0e0e0">Отображать линию оси Z.</div></div>

</div></body>
</html>
